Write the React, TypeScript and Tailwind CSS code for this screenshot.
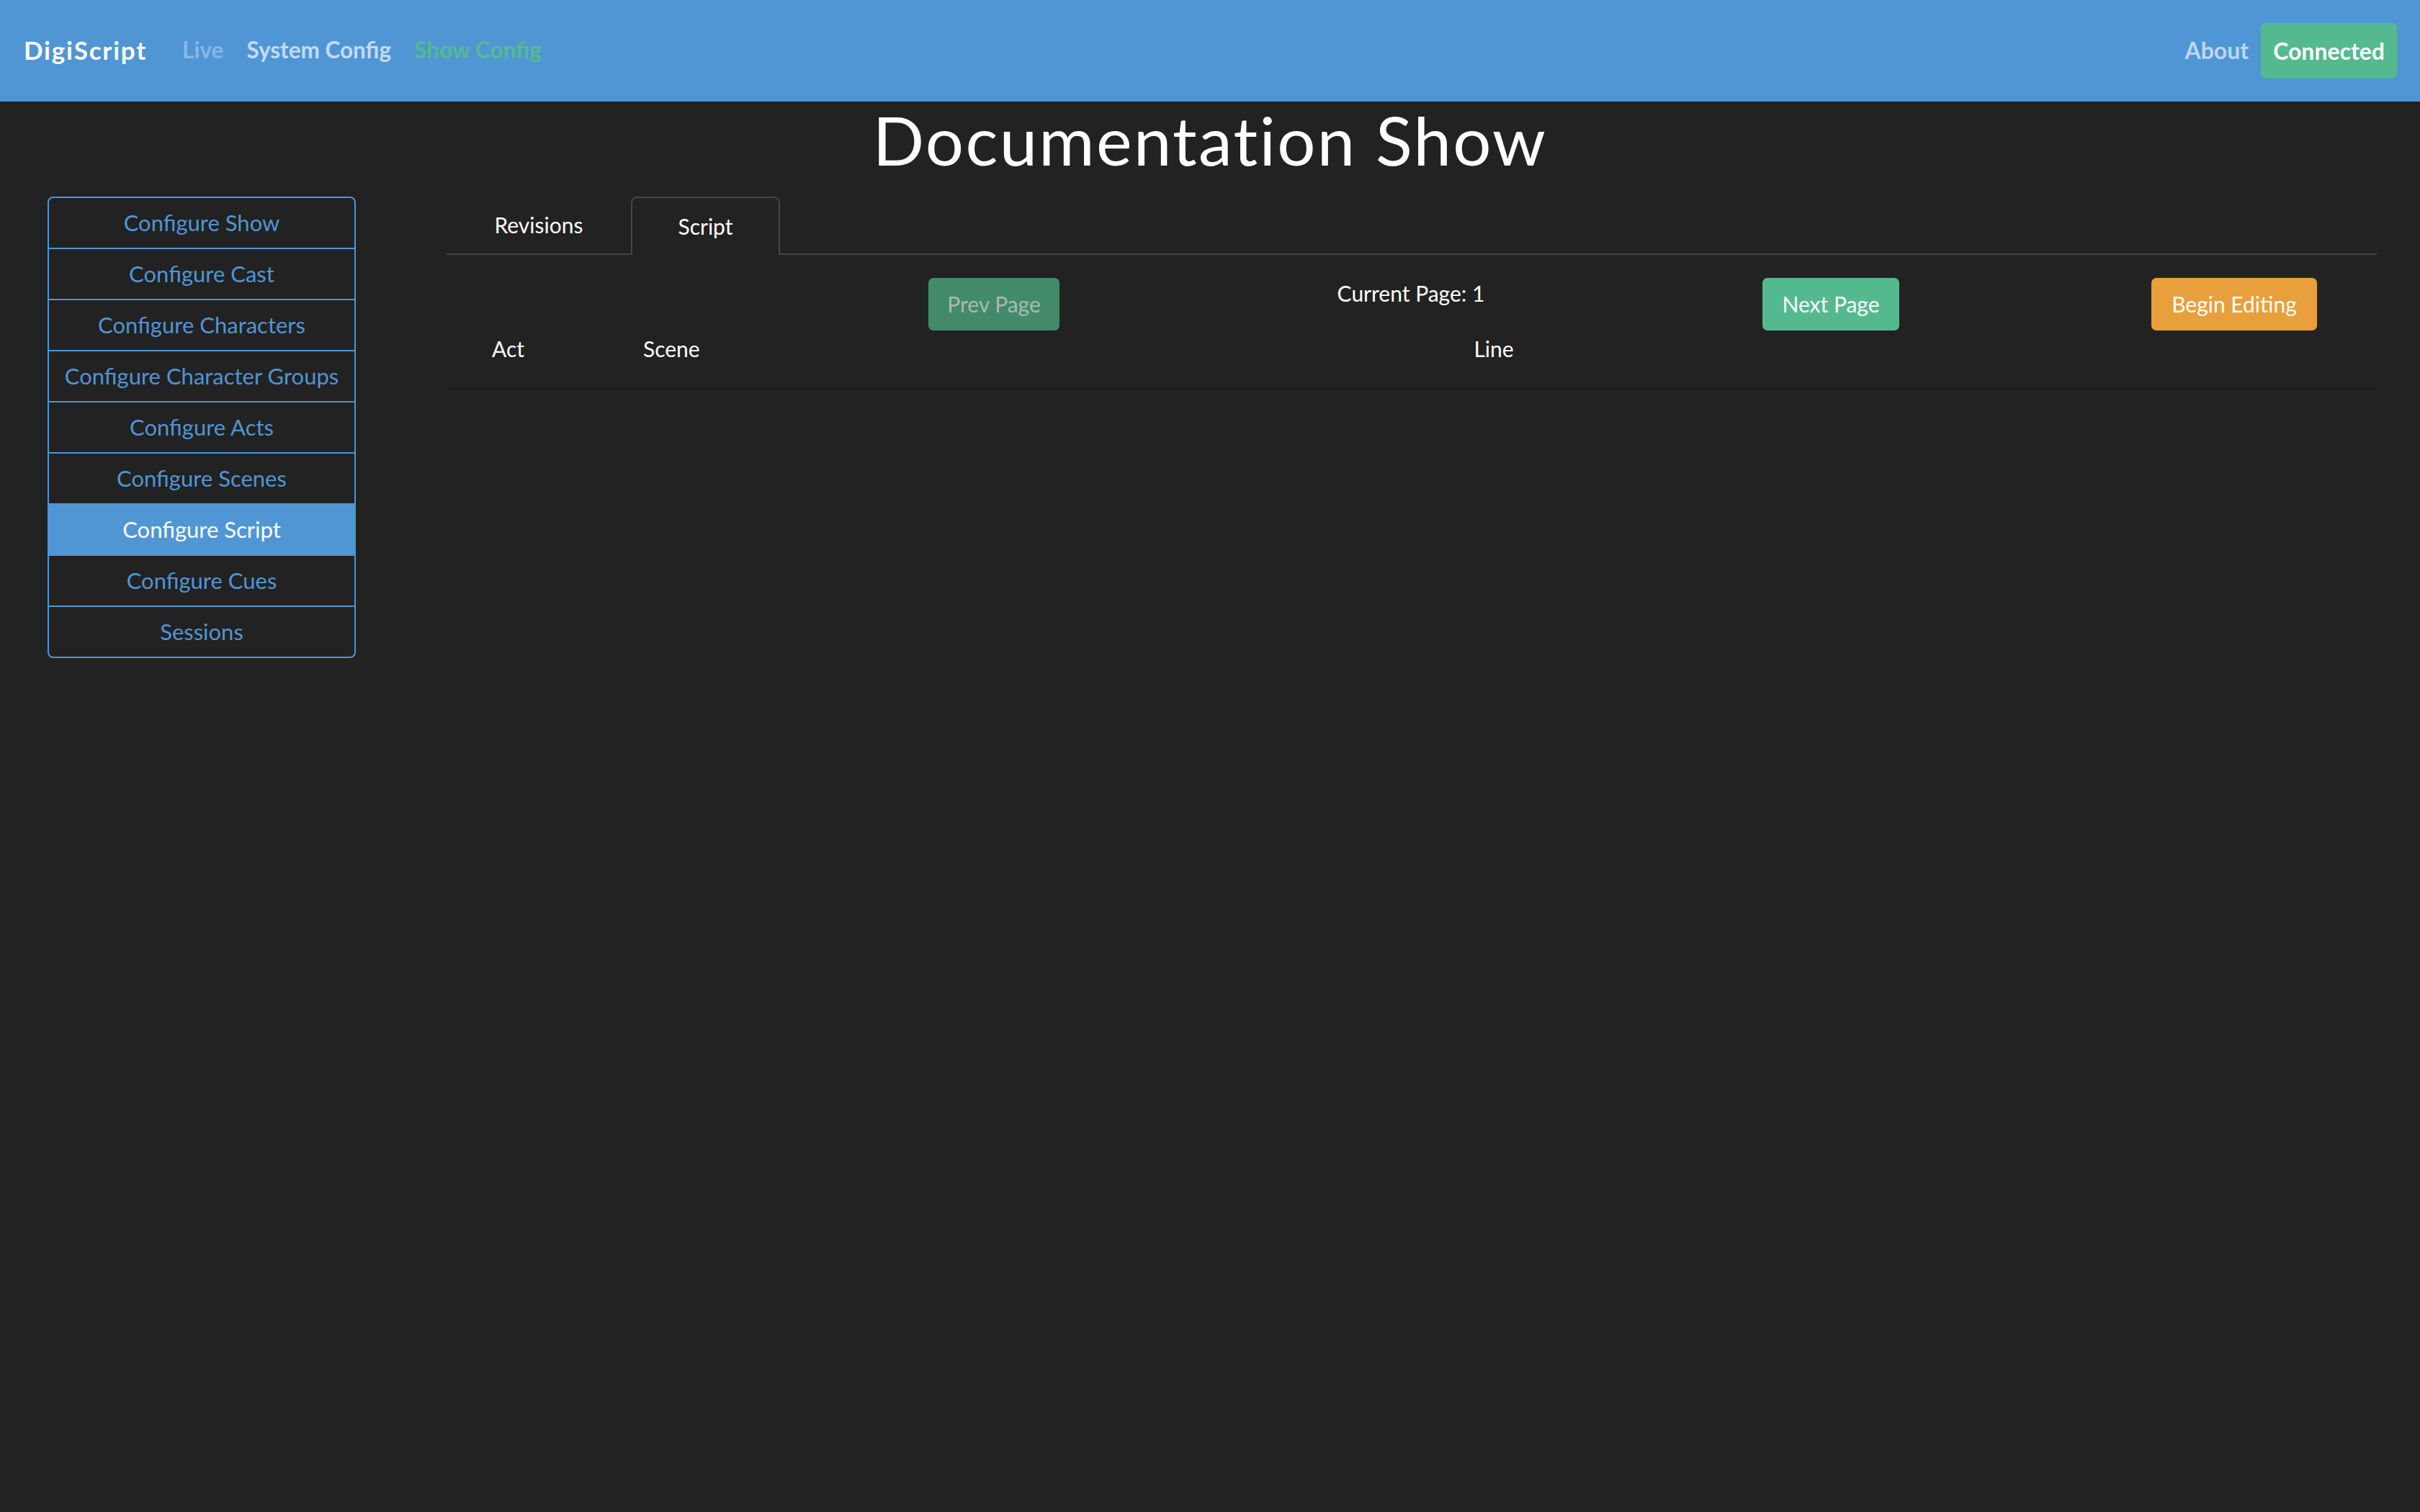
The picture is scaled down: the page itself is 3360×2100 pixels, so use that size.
import React from 'react';

const font = { fontFamily: 'Lato, "Open Sans", sans-serif' };

const sideItems = [
  'Configure Show',
  'Configure Cast',
  'Configure Characters',
  'Configure Character Groups',
  'Configure Acts',
  'Configure Scenes',
  'Configure Script',
  'Configure Cues',
  'Sessions',
];

function NavBar() {
  return (
    <nav className="h-[141px] bg-[#5096d5] flex items-center pl-[33px] pr-[32px]">
      <div className="text-white text-[35px] font-bold mr-[33px] tracking-[1.8px] -mt-[2px]">DigiScript</div>
      <div className="flex items-center text-[31.5px] font-bold -mt-[2px]">
        <span className="px-[16px] text-[#88b6e6]">Live</span>
        <span className="px-[16px] text-[#c4daf1]">System Config</span>
        <span className="px-[16px] text-[#56b98e]">Show Config</span>
      </div>
      <div className="ml-auto flex items-center text-[32px] font-bold">
        <span className="px-[17px] text-[#bdd6f0] -mt-[2px]">About</span>
        <span className="h-[77px] px-[17px] flex items-center rounded-[7px] bg-[#55b98f] text-white">
          Connected
        </span>
      </div>
    </nav>
  );
}

function Sidebar() {
  return (
    <div className="w-[428px] shrink-0 border-2 border-[#4f95d5] rounded-[8px] overflow-hidden">
      {sideItems.map((label, i) => (
        <div
          key={label}
          className={
            'flex items-center justify-center text-[31px] ' +
            (i > 0 ? 'h-[71px] border-t-2 border-[#4f95d5] ' : 'h-[69px] ') +
            (label === 'Configure Script' ? 'bg-[#5096d5] text-white' : 'text-[#4f95d5]')
          }
        >
          {label}
        </div>
      ))}
    </div>
  );
}

function ScriptPanel() {
  return (
    <div className="w-[2680px] ml-[126px] text-white text-[30px]">
      {/* tabs */}
      <div className="flex h-[81px] border-b-2 border-[#464646]">
        <div className="w-[256px] flex items-center justify-center">Revisions</div>
        <div className="w-[207px] h-[81px] flex items-center justify-center border-2 border-b-0 border-[#464646] rounded-t-[8px] bg-[#222]">
          Script
        </div>
      </div>

      {/* page controls */}
      <div className="mt-[32px] grid grid-cols-[474px_572px_586px_580px_72px_396px] items-start">
        <div />
        <div className="justify-self-center h-[73px] px-[26px] flex items-center rounded-[7px] bg-[#438a6b] text-[#a6bcaf]">
          Prev Page
        </div>
        <div className="justify-self-center leading-[42px]">Current Page: 1</div>
        <div className="justify-self-center h-[73px] px-[27px] flex items-center rounded-[7px] bg-[#55b98f]">
          Next Page
        </div>
        <div />
        <div className="justify-self-center h-[73px] px-[28px] flex items-center rounded-[7px] bg-[#e8a03d]">
          Begin Editing
        </div>
      </div>

      {/* table header */}
      <div className="h-[82px] grid grid-cols-[210px_210px_2068px_1fr] leading-[50px] border-b-2 border-[#1c1c1c]">
        <div className="pl-[63px]">Act</div>
        <div className="pl-[63px]">Scene</div>
        <div className="text-center">Line</div>
        <div />
      </div>
    </div>
  );
}

export default function App() {
  return (
    <div className="min-h-screen bg-[#222222]" style={font}>
      <NavBar />
      <h1 className="mt-[6px] text-center text-white text-[94px] leading-none tracking-[2.3px]">
        Documentation Show
      </h1>
      <div className="flex pl-[66px] mt-[32px]">
        <Sidebar />
        <ScriptPanel />
      </div>
    </div>
  );
}
